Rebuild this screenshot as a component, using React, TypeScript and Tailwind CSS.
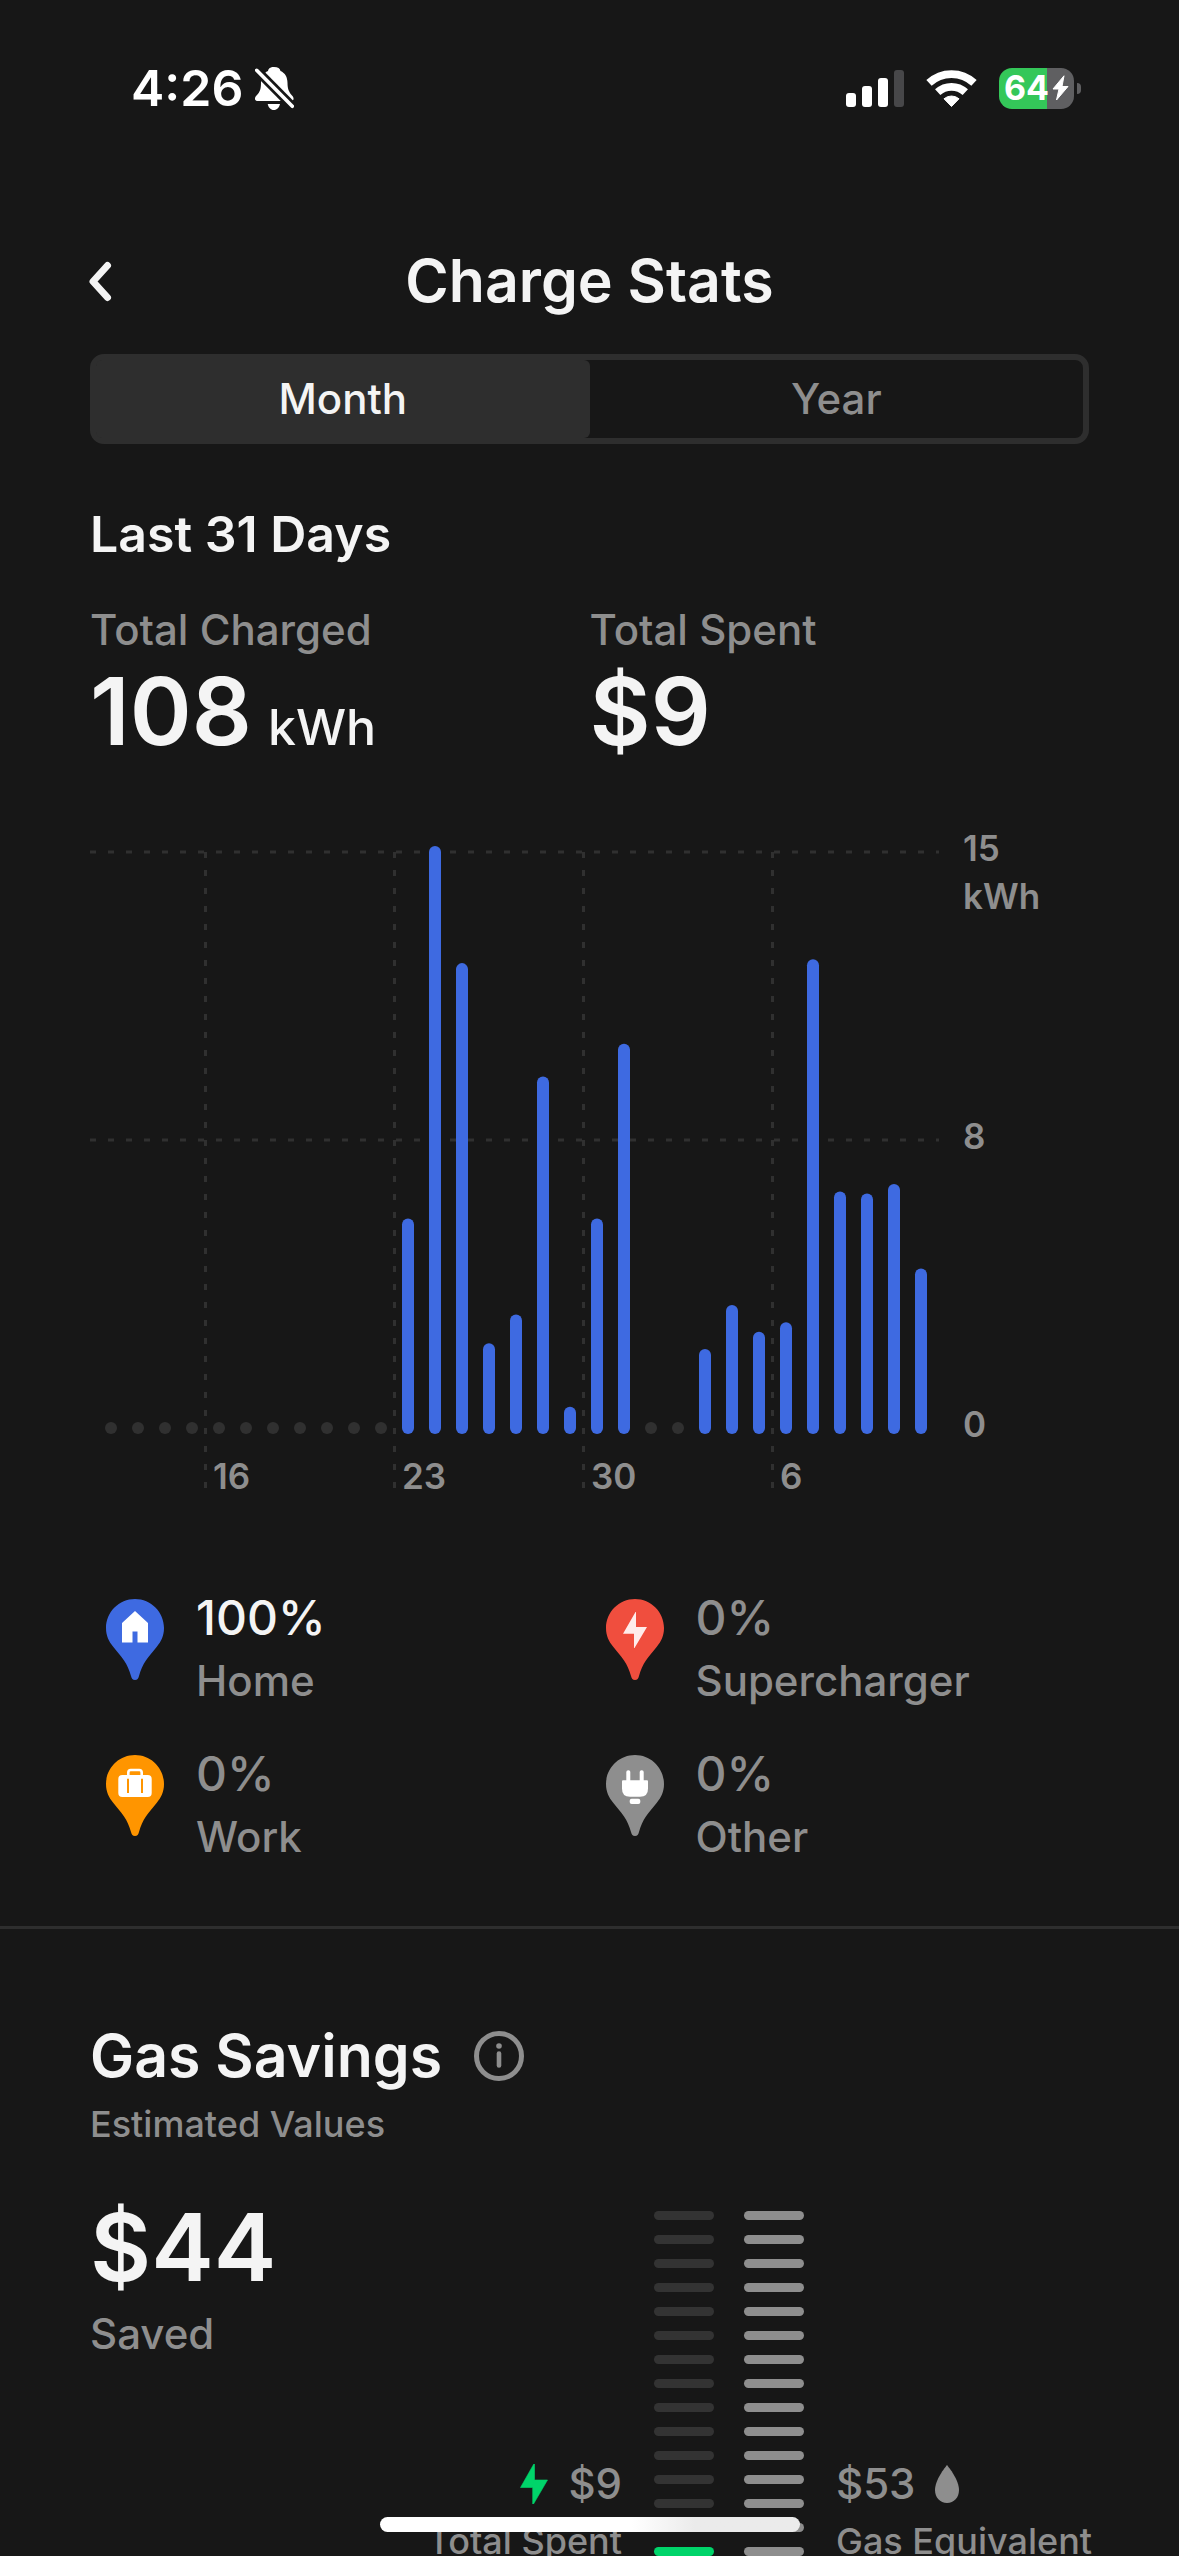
import { useState } from 'react';
import type { ReactNode } from 'react';

// kWh per day, oldest first
const DAILY_KWH = [
  0, 0, 0, 0, 0, 0, 0, 0, 0, 0, 0, 5.3, 15, 11.95, 2.05, 2.8, 9, 0.4, 5.3, 9.85,
  0, 0, 1.9, 3.05, 2.35, 2.6, 12.05, 6, 5.95, 6.2, 4,
];

const WEEK_MARKS = [
  { before: 4, label: '16' },
  { before: 11, label: '23' },
  { before: 18, label: '30' },
  { before: 25, label: '6' },
];

const CHART = { top: 22, base: 598, max: 15, step: 27, firstX: 21, bar: 12 };

function StatusBar() {
  return (
    <div className="flex h-44 items-center justify-between pl-[131px] pr-[98px] text-white">
      <div className="flex items-center gap-3">
        <span className="text-[50px] leading-none font-semibold">4:26</span>
        <svg width="39" height="43" viewBox="0 0 39 43" aria-hidden="true">
          <path
            fill="currentColor"
            d="M19 0c4 0 6 1.6 6.5 4 4.600 2 7 6 7 12 0 6 1.500 9 4.500 12.500 2.500 2.500 2 5.500-1.500 5.500H3c-3.500 0-4-3-1.500-5.500C5 25 6 22 6 16c0-6 2.500-10 7-12 .5-2.400 2-4 6-4z"
          />
          <path fill="currentColor" d="M12.700 37H25c-.8 3.600-3 6-6.200 6s-5.300-2.400-6.100-6z" />
          <path d="M-1 .5 40 42" stroke="#171717" strokeWidth="9" />
          <path d="M1.700 3.300 37.300 39.300" stroke="currentColor" strokeWidth="3.600" strokeLinecap="round" />
        </svg>
      </div>
      <div className="flex items-center gap-[22px]">
        <svg width="58" height="37" viewBox="0 0 58 37" fill="currentColor" aria-hidden="true">
          <rect x="0" y="23" width="10" height="14" rx="3" />
          <rect x="16" y="16" width="10" height="21" rx="3" />
          <rect x="32" y="8" width="10" height="29" rx="3" />
          <rect x="48" y="0" width="10" height="37" rx="3" fill="#474749" />
        </svg>
        <svg width="51" height="37" viewBox="0 0 51 37" fill="none" aria-hidden="true">
          <path d="M3 12.900a33 33 0 0 1 45 0" stroke="currentColor" strokeWidth="7.800" />
          <path d="M11.700 22.200a20.300 20.300 0 0 1 27.600 0" stroke="currentColor" strokeWidth="7.800" />
          <path d="M25.500 36.500 18 28.800a11.500 11.500 0 0 1 15 0z" fill="currentColor" stroke="currentColor" strokeLinejoin="round" />
        </svg>
        <div className="flex items-center gap-[3px]">
          <div className="flex h-[41px] w-[75px] items-center justify-center gap-[3px] rounded-[13px] bg-linear-to-r from-[#34c759] from-64% to-[#5f5f61] to-64%">
            <span className="text-[34px] leading-none font-bold">64</span>
            <svg width="17" height="26" viewBox="0 0 17 26" aria-hidden="true">
              <path
                d="M12 .8 1 14h6L4.500 25 16 11.500h-6z"
                fill="currentColor"
                stroke="currentColor"
                strokeLinejoin="round"
              />
            </svg>
          </div>
          <div className="h-[11px] w-1 rounded-r-full bg-[#5f5f61]" />
        </div>
      </div>
    </div>
  );
}

function Metric({ label, value, unit }: { label: string; value: string; unit?: string }) {
  return (
    <div>
      <div className="text-[42px] leading-[52px] text-[#8e8e8e]">{label}</div>
      <div className="flex items-baseline gap-4">
        <span className="text-[94px] leading-[110px] font-semibold">{value}</span>
        {unit && <span className="text-[50px] leading-none">{unit}</span>}
      </div>
    </div>
  );
}

function UsageChart() {
  const barX = (i: number) => CHART.firstX + i * CHART.step;
  const perKwh = (CHART.base - CHART.top) / CHART.max;
  const middle = (CHART.top + CHART.base) / 2;

  return (
    <svg
      viewBox="0 0 999 676"
      className="mt-16 w-full overflow-visible"
      role="img"
      aria-label="Energy charged per day"
    >
      <g stroke="#303030" strokeWidth="3" strokeDasharray="6 12">
        <line x1="0" x2="849" y1={CHART.top} y2={CHART.top} />
        <line x1="0" x2="849" y1={middle} y2={middle} />
        {WEEK_MARKS.map(({ before, label }) => {
          const x = barX(before) - CHART.step / 2;
          return <line key={label} x1={x} x2={x} y1={CHART.top} y2="658" />;
        })}
      </g>
      {DAILY_KWH.map((kwh, i) => {
        const height = CHART.bar + kwh * perKwh;
        return (
          <rect
            key={i}
            x={barX(i) - CHART.bar / 2}
            y={CHART.base + CHART.bar / 2 - height}
            width={CHART.bar}
            height={height}
            rx={CHART.bar / 2}
            fill={kwh > 0 ? '#3e6ae1' : '#303030'}
          />
        );
      })}
      <g fill="#8e8e8e" fontSize="35" fontWeight="600">
        {WEEK_MARKS.map(({ before, label }) => (
          <text key={label} x={barX(before) - 6} y="659">
            {label}
          </text>
        ))}
        <text x="873" y="31">15</text>
        <text x="873" y="79">kWh</text>
        <text x="873" y="319">8</text>
        <text x="873" y="607">0</text>
      </g>
    </svg>
  );
}

function Pin({ color, children }: { color: string; children: ReactNode }) {
  return (
    <svg width="58" height="81" viewBox="0 0 58 81" className="mt-[13px] shrink-0" aria-hidden="true">
      <path
        fill={color}
        d="M29 0C45 0 58 13 58 29c0 8-3 13.500-7 18.500C42 58.500 36.500 64 33 77c-.7 2.600-1.600 4-4 4s-3.300-1.400-4-4C21.500 64 16 58.500 7 47.500 3 42.500 0 37 0 29 0 13 13 0 29 0z"
      />
      {children}
    </svg>
  );
}

const SOURCES = [
  {
    name: 'Home',
    share: 100,
    color: '#3e6ae1',
    glyph: <path fill="#fff" d="M29 12l13 12v19.500H31.500V32.500h-5v11H16V24z" />,
  },
  {
    name: 'Supercharger',
    share: 0,
    color: '#f04e3e',
    glyph: <path fill="#ffeceb" d="M30 13v15h11L28.500 49H28V34.700H17L29.500 13z" />,
  },
  {
    name: 'Work',
    share: 0,
    color: '#ff9500',
    glyph: (
      <>
        <path d="M22.300 21v-3.500q0-2.500 2.500-2.500h8.400q2.500 0 2.500 2.500V21" fill="none" stroke="#fff" strokeWidth="2.600" />
        <rect x="12.300" y="20" width="33.400" height="22" rx="4" fill="#fff" />
        <path d="M22 23.700v14.300M36 23.700v14.300" stroke="#ff9500" strokeWidth="2" />
      </>
    ),
  },
  {
    name: 'Other',
    share: 0,
    color: '#8e8e8e',
    glyph: (
      <g fill="#fff">
        <rect x="20.300" y="15.300" width="4" height="14" rx="1.800" />
        <rect x="33.700" y="15.300" width="4" height="14" rx="1.800" />
        <path d="M16 26.300q0-1 1-1h24q1 0 1 1v7.400q0 8-8 8H24q-8 0-8-8z" />
        <rect x="23.700" y="43.700" width="10.600" height="5.300" rx="2" />
      </g>
    ),
  },
];

function SavingsGauge({ filledClass, filled, total = 15 }: { filledClass: string; filled: number; total?: number }) {
  return (
    <div className="flex w-[60px] shrink-0 flex-col gap-[15px] pt-[19px]">
      {Array.from({ length: total }, (_, i) => (
        <div
          key={i}
          className={`h-[9px] rounded-full ${i >= total - filled ? filledClass : 'bg-[#333333]'}`}
        />
      ))}
    </div>
  );
}

export default function App() {
  const [range, setRange] = useState('Month');

  return (
    <div className="relative h-screen overflow-hidden bg-[#171717] font-['Inter',sans-serif] font-medium text-[#f4f4f4]">
      <div className="h-full overflow-y-auto [scrollbar-width:none]">
        <StatusBar />

        <header className="grid grid-cols-[1fr_auto_1fr] items-center px-[84px] pt-16">
          <button type="button" aria-label="Back" className="justify-self-start">
            <svg width="32" height="48" viewBox="0 0 32 48" fill="none" aria-hidden="true">
              <path
                d="M23.500 8.500 9 24.500l14.500 16"
                stroke="currentColor"
                strokeWidth="7"
                strokeLinecap="round"
                strokeLinejoin="round"
              />
            </svg>
          </button>
          <h1 className="text-[59px] leading-[82px] font-semibold">Charge Stats</h1>
        </header>

        <section className="px-[90px] pb-[58px]">
          <div className="mt-8 grid h-[90px] grid-cols-2 rounded-[14px] border-[6px] border-[#2e2e2e]">
            {['Month', 'Year'].map((name) => (
              <button
                key={name}
                type="button"
                aria-pressed={range === name}
                onClick={() => setRange(name)}
                className={`rounded-[6px] text-[42px] leading-none ${
                  range === name ? 'bg-[#2e2e2e]' : 'text-[#8e8e8e]'
                }`}
              >
                {name}
              </button>
            ))}
          </div>

          <h2 className="mt-15 text-[50px] leading-[60px] font-semibold">Last 31 Days</h2>
          <div className="mt-10 grid grid-cols-2">
            <Metric label="Total Charged" value="108" unit="kWh" />
            <Metric label="Total Spent" value="$9" />
          </div>

          <UsageChart />

          <ul className="mt-20 grid grid-cols-2 gap-y-[30px]">
            {SOURCES.map(({ name, share, color, glyph }) => (
              <li key={name} className="flex gap-8 pl-4">
                <Pin color={color}>{glyph}</Pin>
                <div className="leading-[63px]">
                  <div className={`text-[48px] ${share > 0 ? '' : 'text-[#8e8e8e]'}`}>{share}%</div>
                  <div className="text-[42px] text-[#8e8e8e]">{name}</div>
                </div>
              </li>
            ))}
          </ul>
        </section>

        <section className="border-t-[3px] border-[#2e2e2e] px-[90px] pt-[84px]">
          <div className="flex items-center gap-8">
            <h2 className="text-[59px] leading-[86px] font-semibold">Gas Savings</h2>
            <button type="button" aria-label="About gas savings" className="text-[#8e8e8e]">
              <svg width="50" height="50" viewBox="0 0 50 50" fill="none" aria-hidden="true">
                <circle cx="25" cy="25" r="22.500" stroke="currentColor" strokeWidth="5" />
                <circle cx="25" cy="15" r="2.800" fill="currentColor" />
                <path d="M25 22.500v12" stroke="currentColor" strokeWidth="4.600" strokeLinecap="round" />
              </svg>
            </button>
          </div>
          <p className="text-[36px] leading-[50px] text-[#8e8e8e]">Estimated Values</p>

          <div className="mt-[43px] flex">
            <div className="flex-1">
              <div className="text-[94px] leading-[110px] font-semibold">$44</div>
              <div className="mt-[6px] text-[42px] leading-[52px] text-[#8e8e8e]">Saved</div>
              <div className="mt-[94px] mr-8 text-right text-[#8e8e8e]">
                <div className="flex items-center justify-end gap-5 text-[42px] leading-[60px]">
                  <svg width="28" height="40" viewBox="0 0 28 40" fill="#00d46a" aria-hidden="true">
                    <path d="M14.500 0v16H27.500L13.500 40h-.8V23.500H.5L13.800 0z" stroke="#00d46a" strokeWidth=".6" strokeLinejoin="round" />
                  </svg>
                  $9
                </div>
                <div className="text-[36px] leading-[54px]">Total Spent</div>
              </div>
            </div>
            <div className="flex gap-[30px]">
              <SavingsGauge filled={1} filledClass="bg-[#00d46a]" />
              <SavingsGauge filled={15} filledClass="bg-[#8e8e8e]" />
            </div>
            <div className="ml-8 flex w-[253px] shrink-0 flex-col justify-end whitespace-nowrap text-[#8e8e8e]">
              <div className="flex items-center gap-5 text-[42px] leading-[60px]">
                $53
                <svg width="24" height="38" viewBox="0 0 24 38" fill="currentColor" aria-hidden="true">
                  <path d="M12 0c2 2.500 12 15 12 25 0 7.500-5 13-12 13S0 32.500 0 25C0 15 10 2.500 12 0z" />
                </svg>
              </div>
              <div className="text-[36px] leading-[54px]">Gas Equivalent</div>
            </div>
          </div>
        </section>
      </div>

      {/* home indicator */}
      <div className="absolute inset-x-0 bottom-6 flex justify-center">
        <div className="h-[15px] w-[420px] rounded-full bg-linear-to-r from-white from-60% to-[#ebebeb] to-75%" />
      </div>
    </div>
  );
}
